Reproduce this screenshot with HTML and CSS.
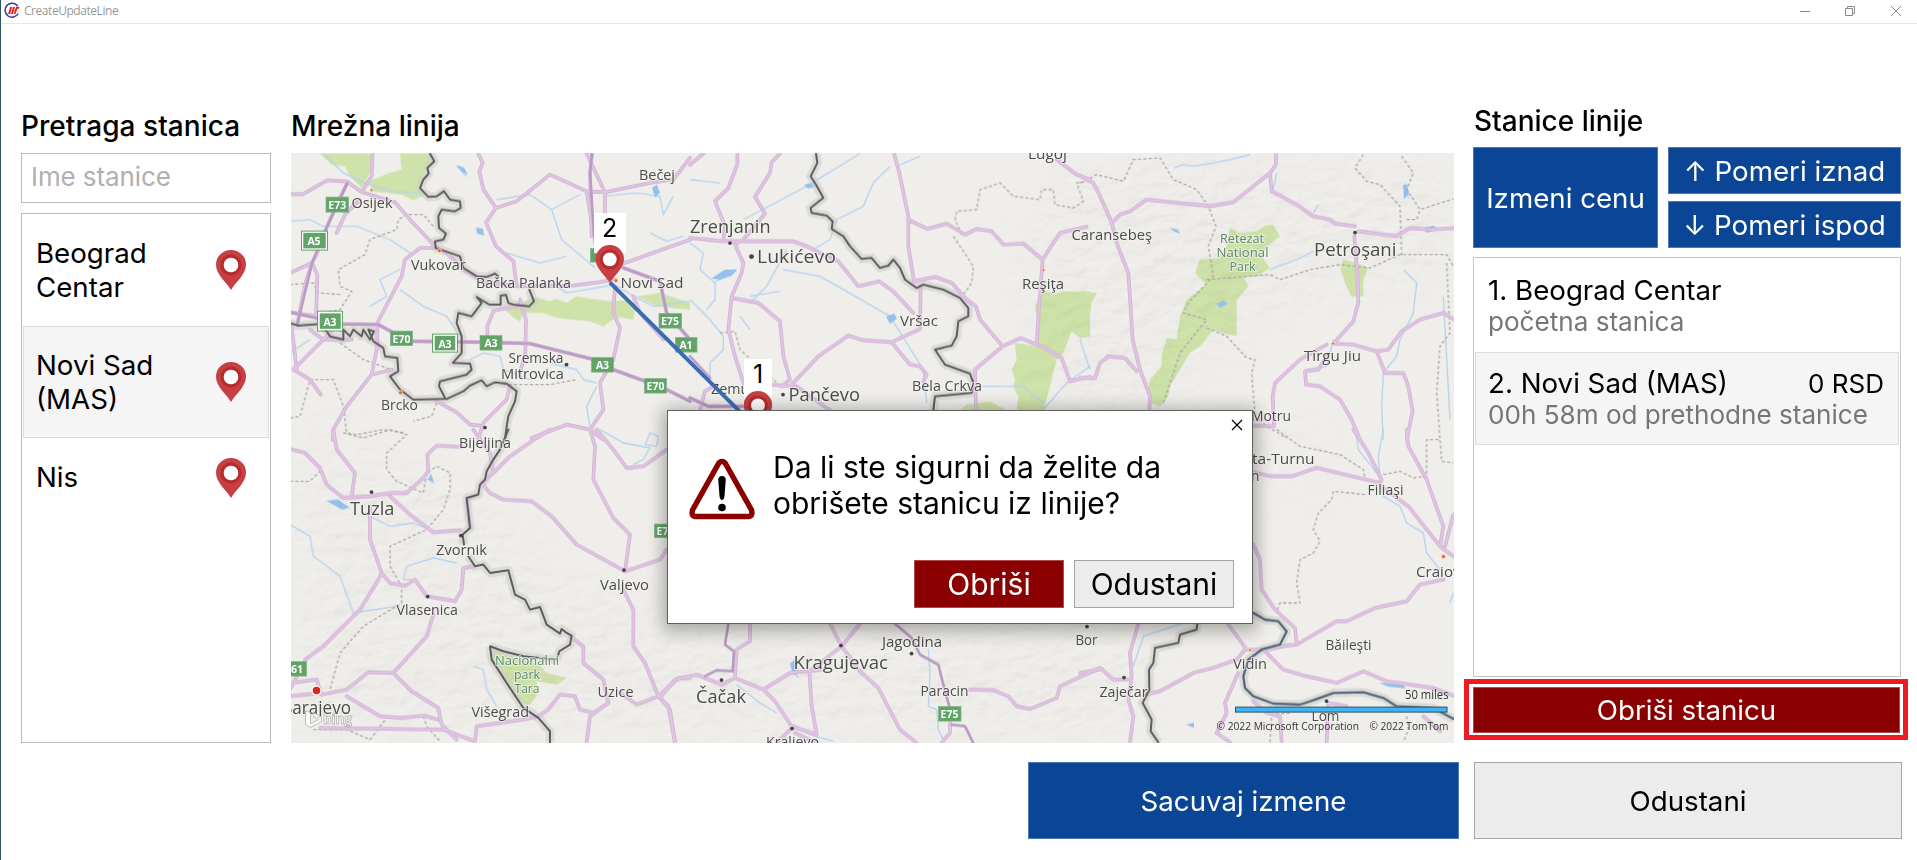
FILE: index.html
```html
<!DOCTYPE html>
<html lang="sr">
<head>
<meta charset="utf-8">
<title>CreateUpdateLine</title>
<link rel="stylesheet" href="styles.css">
</head>
<body>
<svg width="0" height="0" class="defs" aria-hidden="true">
  <symbol id="pin" viewBox="0 0 30 40"><path fill="#c64043" d="M15 40C11.500 33 0 25 0 14.700A15 14.700 0 0 1 30 14.700C30 25 18.500 33 15 40Z"/><circle cx="15" cy="15" r="10.500" fill="#b52b2e"/><circle cx="15" cy="15" r="7.300" fill="#fff"/></symbol>
</svg>
<div class="window">
  <header class="titlebar">
    <svg class="app-icon" width="17" height="17" viewBox="0 0 17 17"><path d="M14.800 4.200A7 7 0 1 0 15.200 11.500" fill="none" stroke="#3a3a9c" stroke-width="1.500"/><path d="M3 12l2.200-.5L7.200 5h2l-2 7zM8 12l2-7h2l-2 7zM11.500 9l1.600-4h3.400l-.7 1.800h-1.500L12.500 12h-1.600z" fill="#f01818"/></svg>
    <span class="app-name">CreateUpdateLine</span>
    <svg class="win-buttons" width="110" height="20" viewBox="0 0 110 20" fill="none" stroke="#8a8a8a"><path d="M0 10.500h10"/><path d="M45.500 7.500h7v7h-7zM47.500 7.500v-2h7v7h-2"/><path d="M91 5l10 10M101 5l-10 10"/></svg>
  </header>
  <main class="content">
    <section class="search">
      <h2>Pretraga stanica</h2>
      <div class="input">Ime stanice</div>
      <ul class="stations">
        <li><span>Beograd<br>Centar</span><svg class="pin"><use href="#pin"/></svg></li>
        <li class="selected"><span>Novi Sad<br>(MAS)</span><svg class="pin"><use href="#pin"/></svg></li>
        <li class="short"><span>Nis</span><svg class="pin"><use href="#pin"/></svg></li>
      </ul>
    </section>
    <section class="map-col">
      <h2>Mrežna linija</h2>
      <svg class="map" width="1163" height="590" viewBox="291 153.400 1163 590">
        <defs>
          <filter id="relief" x="0" y="0" width="100%" height="100%">
            <feTurbulence type="fractalNoise" baseFrequency=".05 .08" numOctaves="3" seed="8"/>
            <feDiffuseLighting surfaceScale="1.400" lighting-color="#fff"><feDistantLight azimuth="235" elevation="60"/></feDiffuseLighting>
            <feColorMatrix values=".42 0 0 0 .62 0 .42 0 0 .62 0 0 .42 0 .62 0 0 0 1 0"/>
          </filter>
          <filter id="soft"><feGaussianBlur stdDeviation="22"/></filter>
          <mask id="hills"><g fill="#fff" filter="url(#soft)"><path d="M291 470L400 450 480 490 560 560 680 620 1060 620 1170 650 1140 743H291z"/><path d="M1080 153H1454V290L1330 300 1230 350 1180 410H1080L1010 400 1020 230z"/><path d="M291 400L360 380 400 460 291 480zM1260 410H1350V520H1280z" opacity=".6"/></g></mask>
          <g id="roads">
            <g transform="translate(290 140) scale(.33333)">
              <path d="M0 164H38L112 122 172 126 215 158 245 110 248 40M172 130L140 195 105 275 80 345 66 370 45 435 22 555M215 158L315 188 360 240 440 325 470 340 520 390 580 425 680 440M600 432L690 440 850 438 925 428 975 420M140 280L165 225 210 180M66 370L82 405 78 530M0 400L66 370M0 518L120 535 150 553 265 555 330 590 370 605 600 608 720 612 905 658 970 690 1120 745 1200 785M440 325L390 325 345 360 335 410 262 550 262 620 245 705 170 800 130 870 128 900M440 785L500 818 540 855 570 858M305 690L245 705M120 580L30 670 10 690 60 720 92 765M5 560L20 690M565 42L578 70 568 95 580 150 618 205 588 248 618 320 670 365 680 440M618 205L680 185 780 105 890 155 945 158 1080 130 1150 120 1200 55M890 42L945 158 945 220M890 155L912 290 930 380M660 740L650 780 580 850 565 900M690 480L708 540 706 640 690 700M690 495L610 515 592 560 592 610M975 440L970 520 990 565 970 660 930 730 940 810 900 870M990 375L1200 300M1000 385L1110 425 1130 520 1200 600M1030 470L1050 520 1120 600M900 870L830 855 725 895M900 870L940 900"/>
              <path d="M906 42L900 100 905 290M185 600L100 600 60 570"/>
            </g>
            <g transform="translate(690 140) scale(.33333)">
              <path d="M142 42V75L115 145 75 185 105 260 100 305M270 42L245 68 240 100 195 172 225 222 160 300 135 315 160 370 155 400 125 470 115 570 135 650 170 760M0 295L100 305 310 305 355 322 400 345 445 365 505 440 568 425 610 455 670 520M125 475L205 490 270 545 280 650 300 720 275 740 M300 740L385 650 475 588 520 602 605 608 690 568 692 440M605 608L660 675 690 680 710 705 700 725M612 42L628 100 655 230 655 320 672 425 735 412 785 430 830 480 858 500 870 540 938 620 855 690 858 812M655 240L712 268 770 252 825 285 860 268 905 275 940 315 1000 312 1058 360 1110 280 1190 262M1058 360L1048 490 1040 615 992 595 938 620M1040 615L1075 630 1115 655 1140 725 1200 712M1100 60L1160 105 1200 120M0 75L40 42M240 735L320 740 420 812M0 775L55 800 160 800M30 812L45 755 80 735"/>
            </g>
            <g transform="translate(1080 140) scale(.33333)">
              <path d="M0 108L40 130 58 165 95 250 112 315 145 400 158 600 180 690 210 770 208 812M95 250L120 225 150 215 200 180 390 200 460 188 570 100 588 75V42M570 100L575 155 650 195 700 230 750 240 765 252 825 260M835 275L950 290 990 265 1050 270 1120 266M823 290L832 400 835 490 820 545 760 612 820 615 890 635 915 700 970 700 985 740 998 815 980 900M890 635L925 630 965 575 1020 540 1090 520 1120 538M740 615L660 660 585 730 578 770 582 860 520 858M740 650L715 690 675 695 678 735 720 740 780 780 815 840 840 900M0 715H45L60 670 85 650 135 655 170 695"/>
            </g>
            <g transform="translate(290 430) scale(.33333)">
              <path d="M130 0L140 60 195 130 185 200M0 58L45 70 90 115 110 165 160 205 240 200 300 190 350 190 400 145 415 125 412 75 440 48 520 52M300 200L360 255 430 308 510 302M240 230L240 330 275 430 265 450 210 540 100 650 45 690M275 430L300 460 345 468 375 450 410 500 495 515 515 480 520 415 550 410M430 555L410 620 310 730 235 728 170 780 95 795M310 730L365 785 445 835 455 885 500 930M445 870L400 858 335 865 270 860 170 800M0 760L80 750 95 795M20 740L0 780M0 800L90 790M550 0L600 70 610 130 575 160 600 190 640 210 725 215 785 260 860 345 1005 425M560 195L530 210 540 295M610 130L660 80 740 25 780 0M900 0L915 50 910 150 970 265 1020 315 1005 425 1110 390 1130 360M920 0L970 60 1010 115 1060 110 1130 60M1000 480L1030 540 1030 650 1065 700 1105 800 1040 825 990 790M840 620L880 650 880 700 940 750 955 820 900 860 890 935M955 820L910 850 870 840 855 800 810 795 775 840 745 860 700 870 560 890 555 935 460 900 90 895M1105 800L1140 840 1155 935M1105 800L1165 745 1200 745"/>
            </g>
            <g transform="translate(660 610) scale(.33333)">
              <path d="M0 265L45 210 110 195 185 225 225 205 310 240 390 190 490 180M225 205L230 120 270 95 270 42M0 265L25 290 45 400M310 240L345 275 395 350 470 375 455 290 448 185 545 110 510 42M545 110L600 42M545 110L600 185 655 235 720 360 770 400M350 400L395 355M405 370L470 400M930 240L1000 242 1045 260 1070 290 1110 298 1190 265 1200 230 1320 175M870 340V370L845 400"/>
            </g>
            <g transform="translate(1080 430) scale(.33333)">
              <path d="M820 0L865 70 905 150 900 160 710 115 635 140H575L520 128M980 0L985 50 1040 150 1090 290 1080 350 985 230 905 170M1120 255L1095 350M1080 350L1120 380M1090 450L1020 465 980 515 885 535 800 575 770 575 650 645 645 595 585 540 545 480 540 390 520 345M650 645L540 660 500 660 445 585M495 660L470 690 400 715 340 730 240 785 195 795M555 665L610 720 680 740 770 760 850 725 920 755 1060 775 1120 798M475 730L435 820 440 850 410 910 450 938M0 730L65 718 100 750 150 750M175 582L150 670 155 740 145 810 160 860 150 938M520 815L560 850 600 860 605 938M745 820L740 938M745 820L800 830M1030 860L1080 905"/>
            </g>
          </g>
          <g id="highways">
            <path transform="translate(290 140) scale(.33333)" d="M172 130L105 275 66 370 22 555M0 518L120 545 150 553 265 555 330 590 370 605 600 608 720 612 905 658 970 690 1120 745 1200 785M1000 385L1110 425 1130 520 1200 600M906 42L900 100 912 290"/>
            <path transform="translate(690 140) scale(.33333)" d="M0 650L60 715M0 775L55 800 160 800"/>
            <path transform="translate(660 610) scale(.33333)" d="M205 42L195 105 222 125 218 185 170 182 135 200M705 42L755 85 780 135 835 165 855 245 868 290M875 345L915 350 940 400"/>
          </g>
          <g id="borders">
            <path transform="translate(290 140) scale(.33333)" d="M420 42L433 65 412 85 416 102 400 120 390 145 415 172 440 170 462 155 480 180 510 185 512 205 495 215 455 210 445 230 447 265 468 282 460 300 435 305 437 325 510 350 520 385 560 410 590 412 615 402 625 410M718 450L732 485 718 500 670 495 655 490 648 466 632 468 632 495 598 495 560 472 575 490 545 530 505 520 500 550 515 590 515 640 488 670 540 672 545 690 530 705 450 725 447 740 465 775M0 550L25 558 95 553 120 590 160 600 160 570 180 590 190 570 215 590 220 570 240 600 252 575 235 570 250 605 280 625 285 650 322 655 325 695 300 710 330 750 370 780 470 778 520 755 540 738 575 722 590 740 615 728 650 732 680 755 675 785 655 830 650 860 645 900"/>
            <path transform="translate(290 430) scale(.33333)" d="M655 0L630 60 610 90 590 125 585 150 570 165 565 195 530 205 540 295 518 315 522 345M535 380L555 410 580 405 600 430 655 422 675 495 705 510 720 540 750 532 770 585 810 612 815 598 830 610 845 618 840 645 808 665 800 690M600 650L640 665 700 680 800 690M600 650L605 690 650 760 700 835 745 865 780 905 780 938"/>
            <path transform="translate(690 140) scale(.33333)" d="M378 42L382 70 362 110 378 135 400 175 362 205 365 220 410 228 428 245 425 268 460 290 480 320 515 358 545 355 570 385 595 378 610 360 630 385 645 420 680 445 700 435 760 450 810 475 835 505 835 530 805 545 800 590 785 618 735 630 765 675 840 702 850 730 845 760 735 770 730 812"/>
            <path transform="translate(1080 430) scale(.33333)" d="M352 582L350 600 300 615 295 640 225 655 220 700 207 720 208 780 188 820 215 870 212 905 235 938"/>
          </g>
          <g id="danube"><path transform="translate(1080 430) scale(.33333)" d="M520 550L555 570 595 575 620 605 600 645 545 660 505 690 490 740 495 775 520 800 580 822 660 825 700 812 760 790 850 788 910 805 950 830 1060 835 1120 868"/></g>
        </defs>
        <rect x="291" y="153" width="1163" height="591" fill="#efeeea"/>
        <g class="parks">
          <path transform="translate(290 140) scale(.33333)" d="M90 42H245L240 100 215 145 180 110 165 80 125 75zM330 42H420L430 70 400 100 390 145 405 165 370 182 335 165 250 155 235 125 300 100 335 90zM640 505L680 500 730 470 780 485 800 478 830 490 860 470 900 478 970 485 1000 482 1040 490 1030 540 980 532 940 560 900 545 850 540 800 535 760 520 700 520 690 545 665 530zM1040 470L1110 460 1200 490V510L1100 500z"/>
          <path transform="translate(690 140) scale(.33333)" d="M1058 450L1090 465 1120 455 1200 455V590L1170 595 1145 575 1120 640 1100 660 1080 740 1060 812H980L985 770 970 740 975 720 965 690 980 660 975 610 1040 620 1045 560 1035 500zM830 795L870 790 900 785 950 812H810z"/>
          <path transform="translate(1080 140) scale(.33333)" d="M0 455L50 460 35 490 25 560 0 600zM450 265L480 280 530 275 555 258 580 255 600 290 560 320 545 350 570 385 530 410 490 410 505 440 470 480 470 590 430 580 400 570 360 620 330 640 300 690 270 740 265 770 240 800 212 790 205 750 210 720 245 680 245 650 260 595 290 600 300 530 320 480 380 435 345 400 360 360 420 355 440 320zM790 360L830 370 865 385 850 420V470H815L795 430 782 390z"/>
          <path transform="translate(290 430) scale(.33333)" d="M600 655L640 668 690 690 740 700 770 730 830 745 800 765 740 755 740 800 720 825 690 820 640 750 605 690z"/>
        </g>
        <g mask="url(#hills)" class="relief"><rect x="291" y="153" width="1163" height="591" filter="url(#relief)"/></g>
        <g class="rivers">
          <path transform="translate(290 140) scale(.33333)" d="M100 42L160 100 225 130 300 155 400 160M0 245L60 240 100 260 200 260 300 300 360 340M240 500L290 470 270 420 330 390M330 450L400 500 470 530 510 590M620 180L720 165 785 210 870 165M785 210L815 300 915 385M650 340L750 370 830 350M800 440L830 460 975 435 1030 470 1090 500 1200 485M500 80L530 110M940 170L1040 160 1110 170 1120 225 1150 170M1080 280L1130 305 1180 290M540 660L580 640 630 650 640 690 720 720M920 740L890 800 900 860M0 640L60 600M780 670L860 690 880 720 920 730"/>
          <path transform="translate(690 140) scale(.33333)" d="M0 480L60 540 100 590 100 630 60 670 60 710M0 310L40 340 30 390 75 430 75 480 50 510M70 430L140 390M160 240L350 140 510 42M600 80L550 130 520 200 440 240 420 300 370 330M280 390L390 410 600 530 700 690 710 790M180 470L270 455M150 530L180 570M0 120L90 130M290 330L230 440 180 490M1200 680L1130 730 1060 810M860 740L1000 740 1060 790M620 80L690 50"/>
          <path transform="translate(1080 140) scale(.33333)" d="M280 85L310 75 340 80 400 70 450 60 510 45M570 390L650 360 700 335M60 170L95 240M970 390L1010 430 1000 520 960 600 950 650 910 700 905 800 910 900M0 600L30 690M1090 470L1110 840M580 150L590 100M760 600L740 680 680 690M700 220L715 195M975 130L985 175"/>
          <path transform="translate(290 430) scale(.33333)" d="M0 285L60 320 70 380 150 440 190 550 320 530M240 260L300 290 370 280 420 300M500 400L430 385 350 410 340 450 380 450M930 0L1000 40 1080 55 1060 90 1030 105M1065 45L1080 10 1105 20 1100 50 1065 45M550 710L580 720 590 780 620 830M410 150L430 145"/>
          <path transform="translate(660 610) scale(.33333)" d="M230 225L300 280 350 310M400 345L450 375 520 395M805 120L810 190 805 290 830 300 835 360 850 390M395 180L415 205"/>
          <path transform="translate(1080 430) scale(.33333)" d="M910 0L895 80 900 150 910 200 960 230 980 280 1030 310 1040 370 1080 420M830 20L835 60 890 130M160 710L190 620 310 580M1110 520L1120 490M560 660L630 640"/>
        </g>
        <g class="lakes">
          <path d="M456 165l8 3 4 7-5-2zM476 228l7 1 1 7-7-2zM326 501l12-1 12 8-8 2zM804 185l9-2 3 4-8 2zM886 317l8-3 3 5-7 5zM711 279l14-9 12 0-5 6-12 4zM1170 228l8 2 2 4-6-2zM1216 304l8-3 4 3-8 4zM1424 228l10-2 4 4-12 3zM1403 185h4l2 8-5 7zM652 188l5-3 3 8-5 5zM1379 683l23 1 4 5-18-2zM1186 725l8-2v5zM790 664l5-4 3 14-5 1zM428 480l3-6 3 10z"/>
        </g>
        <use href="#borders" class="halo"/>
        <use href="#danube" class="halo"/>
        <g class="dashed">
          <path transform="translate(290 140) scale(.33333)" d="M430 260L400 225 350 225 325 240 320 270 240 300 225 345 145 390 150 440 185 455 150 510 110 520M0 435L70 430 85 460 150 465M150 610L220 660 305 690M0 835L30 830 60 720 130 720 160 800 170 880 200 885 280 870 345 880M440 790L425 830 370 845M640 735L780 735 860 720"/>
          <path transform="translate(690 140) scale(.33333)" d="M790 290L850 380 845 430 820 465M815 285L795 240 800 215 860 210 870 150 930 130 970 170 1050 180 1055 150 1090 150 1095 195 1150 205 1180 185 1160 130 1200 125M90 580L135 575 150 630 240 710 270 740"/>
          <path transform="translate(1080 140) scale(.33333)" d="M0 130L50 105 130 125 160 60 240 55 280 120 350 150 385 200 408 260 385 320 400 410 325 490 310 520 380 540 300 640 250 790M380 420L570 405 600 420 690 390 780 375 870 385 960 345 1100 345 1120 380M850 45L825 85 860 125 900 135 960 200 965 350M965 50L1000 100 980 150 1020 210 1120 178M980 240L1010 240 1020 210M380 565L440 590 500 655 525 660 515 700 525 830 560 860 620 895M1100 370L1110 580 1080 620 1070 760 1080 900"/>
          <path transform="translate(290 430) scale(.33333)" d="M160 10L220 25 300 0 350 15 290 70 290 120 320 155 400 190 410 130 440 110 480 130 480 180 460 240 410 300 300 350 300 410 335 470 335 520 220 590 150 670 120 780M0 155L60 155 90 125M70 900L170 900 240 930 290 865 400 860 410 890 450 935"/>
          <path transform="translate(1080 430) scale(.33333)" d="M590 0L660 50 780 75 850 120 855 150M910 135L960 125 1000 145 1040 140 1040 30 1080 30 1085 95 1120 100M855 195L760 185 755 210 715 250 700 300 720 335 700 370 660 390 650 460 660 520 600 520 590 545M570 938L575 855 630 850M980 860L985 900 970 938"/>
        </g>
        <use href="#roads" class="road-out"/><use href="#roads" class="road-in"/>
        <use href="#highways" class="hwy"/>
        <use href="#borders" class="border"/>
        <use href="#danube" class="danube"/>
        <g class="dots"><circle cx="371.500" cy="492.500" r="1.900"/><circle cx="461" cy="536" r="1.900"/><circle cx="427.700" cy="597" r="1.900"/><circle cx="624" cy="570.500" r="1.900"/><circle cx="485" cy="428" r="1.900"/><circle cx="566.500" cy="365" r="1.900"/><circle cx="730" cy="243.500" r="1.900"/><circle cx="751.500" cy="257" r="2.400"/><circle cx="783" cy="395" r="1.900"/><circle cx="1355" cy="233" r="1.900"/><circle cx="721.500" cy="680.500" r="1.900"/><circle cx="792" cy="729" r="1.900"/><circle cx="841" cy="646" r="1.900"/><circle cx="911.500" cy="654" r="1.900"/><circle cx="1087" cy="627" r="1.900"/><circle cx="1124" cy="678" r="1.900"/><circle cx="1326.500" cy="701.500" r="1.900"/></g>
        <g class="reddots"><circle cx="371.500" cy="190.500" r="1.500"/><circle cx="439.500" cy="251" r="2"/><circle cx="616" cy="281" r="2"/><circle cx="400.500" cy="393" r="2"/><circle cx="1043.500" cy="270.500" r="1.500"/><circle cx="1333" cy="344" r="1.500"/><circle cx="1250" cy="650.500" r="1.500"/><circle cx="1443.500" cy="557" r="2"/></g>
        <circle cx="316.500" cy="691" r="4.500" fill="#d8281f" stroke="#f7f5f2" stroke-width="1.500"/>
        <g class="places">
          <text x="351.500" y="208" textLength="41" lengthAdjust="spacingAndGlyphs">Osijek</text>
          <text x="411" y="270" textLength="54.500" lengthAdjust="spacingAndGlyphs">Vukovar</text>
          <text x="476" y="288.500" textLength="95" lengthAdjust="spacingAndGlyphs">Bačka Palanka</text>
          <text x="620.500" y="288.500" textLength="63" lengthAdjust="spacingAndGlyphs">Novi Sad</text>
          <text x="639" y="180.500" textLength="36" lengthAdjust="spacingAndGlyphs">Bečej</text>
          <text x="508.500" y="363" textLength="55" lengthAdjust="spacingAndGlyphs">Sremska</text>
          <text x="501" y="379" textLength="63" lengthAdjust="spacingAndGlyphs">Mitrovica</text>
          <text x="381" y="410" textLength="37" lengthAdjust="spacingAndGlyphs">Brcko</text>
          <text x="459" y="448" textLength="52" lengthAdjust="spacingAndGlyphs">Bijeljina</text>
          <text x="436" y="555.500" textLength="51" lengthAdjust="spacingAndGlyphs">Zvornik</text>
          <text x="396.500" y="615.500" textLength="61.500" lengthAdjust="spacingAndGlyphs">Vlasenica</text>
          <text x="600" y="590" textLength="49" lengthAdjust="spacingAndGlyphs">Valjevo</text>
          <text x="597.500" y="697" textLength="36" lengthAdjust="spacingAndGlyphs">Uzice</text>
          <text x="471.500" y="717.500" textLength="57.500" lengthAdjust="spacingAndGlyphs">Višegrad</text>
          <text x="900" y="326.500" textLength="38" lengthAdjust="spacingAndGlyphs">Vršac</text>
          <text x="912" y="391.500" textLength="70" lengthAdjust="spacingAndGlyphs">Bela Crkva</text>
          <text x="1022" y="289" textLength="42" lengthAdjust="spacingAndGlyphs">Reşiţa</text>
          <text x="1071.500" y="240" textLength="80.500" lengthAdjust="spacingAndGlyphs">Caransebeş</text>
          <text x="1028" y="159.500" textLength="39" lengthAdjust="spacingAndGlyphs">Lugoj</text>
          <text x="711" y="394.500" textLength="47" lengthAdjust="spacingAndGlyphs">Zemun</text>
          <text x="1304" y="361.500" textLength="57" lengthAdjust="spacingAndGlyphs">Tîrgu Jiu</text>
          <text x="1251" y="421.500" textLength="40" lengthAdjust="spacingAndGlyphs">Motru</text>
          <text x="1207" y="464" textLength="107.500" lengthAdjust="spacingAndGlyphs">Drobeta-Turnu</text>
          <text x="1212" y="481" textLength="47.500" lengthAdjust="spacingAndGlyphs">Severin</text>
          <text x="1367.500" y="495" textLength="36" lengthAdjust="spacingAndGlyphs">Filiaşi</text>
          <text x="1416" y="577" textLength="53" lengthAdjust="spacingAndGlyphs">Craiova</text>
          <text x="1325.500" y="650.500" textLength="46" lengthAdjust="spacingAndGlyphs">Băileşti</text>
          <text x="1233" y="669" textLength="34" lengthAdjust="spacingAndGlyphs">Vidin</text>
          <text x="1311.500" y="721" textLength="28" lengthAdjust="spacingAndGlyphs">Lom</text>
          <text x="1075.500" y="645" textLength="22" lengthAdjust="spacingAndGlyphs">Bor</text>
          <text x="1099.500" y="697.500" textLength="48" lengthAdjust="spacingAndGlyphs">Zaječar</text>
          <text x="882" y="647" textLength="60" lengthAdjust="spacingAndGlyphs">Jagodina</text>
          <text x="920.500" y="696.500" textLength="48" lengthAdjust="spacingAndGlyphs">Paracin</text>
          <text x="766" y="747" textLength="53" lengthAdjust="spacingAndGlyphs">Kraljevo</text>
          <g class="mid">
            <text x="690" y="233.500" textLength="80.500" lengthAdjust="spacingAndGlyphs">Zrenjanin</text>
            <text x="757" y="263.500" textLength="79" lengthAdjust="spacingAndGlyphs">Lukićevo</text>
            <text x="788.500" y="401" textLength="71.500" lengthAdjust="spacingAndGlyphs">Pančevo</text>
            <text x="350" y="515" textLength="44.500" lengthAdjust="spacingAndGlyphs">Tuzla</text>
            <text x="1314" y="256" textLength="82.500" lengthAdjust="spacingAndGlyphs">Petroşani</text>
            <text x="793.500" y="669" textLength="94.500" lengthAdjust="spacingAndGlyphs">Kragujevac</text>
            <text x="696" y="703.500" textLength="50" lengthAdjust="spacingAndGlyphs">Čačak</text>
            <text x="283" y="714.500" textLength="68" lengthAdjust="spacingAndGlyphs" class="sarajevo">Sarajevo</text>
          </g>
          <g class="park-name">
            <text x="1220" y="243" textLength="44" lengthAdjust="spacingAndGlyphs">Retezat</text><text x="1216.500" y="257" textLength="52" lengthAdjust="spacingAndGlyphs">National</text><text x="1229.500" y="271" textLength="26" lengthAdjust="spacingAndGlyphs">Park</text>
            <text x="495" y="665.500" textLength="64" lengthAdjust="spacingAndGlyphs">Nacionalni</text><text x="514" y="679.500" textLength="26" lengthAdjust="spacingAndGlyphs">park</text><text x="514.500" y="693.500" textLength="25" lengthAdjust="spacingAndGlyphs">Tara</text>
          </g>
        </g>
        <g class="shields">
          <rect x="326" y="197.500" width="22.500" height="15"/><text x="337.200" y="209">E73</text>
          <rect x="302.500" y="232.500" width="24" height="17" class="ringed"/><text x="314" y="245.500">A5</text>
          <rect x="319" y="313" width="22.500" height="17" class="ringed"/><text x="330" y="326">A3</text>
          <rect x="390.500" y="331.500" width="22" height="14.500"/><text x="401.500" y="343">E70</text>
          <rect x="434" y="335.500" width="22" height="16" class="ringed"/><text x="445" y="348">A3</text>
          <rect x="480" y="336" width="22" height="14.500"/><text x="491" y="347.700">A3</text>
          <rect x="591.500" y="358" width="22" height="14.500"/><text x="602.500" y="369.700">A3</text>
          <rect x="644.500" y="379" width="22" height="14.500"/><text x="655.500" y="390.500">E70</text>
          <rect x="659" y="314" width="22.500" height="14.500"/><text x="670" y="325.500">E75</text>
          <rect x="675.500" y="338" width="21.500" height="14.500"/><text x="686" y="349.500">A1</text>
          <rect x="590.500" y="249" width="22" height="13.500"/>
          <rect x="284" y="662" width="22.500" height="14.500"/><text x="294" y="673">761</text>
          <rect x="654.500" y="524.500" width="22" height="13.500"/><text x="665.500" y="535.500">E75</text>
          <rect x="938.500" y="707" width="22.500" height="14.500"/><text x="949.500" y="718.500">E75</text>
        </g>
        <g class="bing"><path d="M305.500 711l5 2v11l8-4-4-2-2-5 9 4v5l-11 6-5-3z"/><text x="323" y="724" textLength="29" lengthAdjust="spacingAndGlyphs">bing</text></g>
        <rect x="1235.500" y="707.500" width="211.500" height="5" fill="#3db5f5" stroke="#35505e"/>
        <g class="credits"><text x="1405" y="699.500" textLength="43.500" lengthAdjust="spacingAndGlyphs" class="miles">50 miles</text><text x="1216.500" y="730" textLength="142.500" lengthAdjust="spacingAndGlyphs">© 2022 Microsoft Corporation</text><text x="1369.500" y="730" textLength="79" lengthAdjust="spacingAndGlyphs">© 2022 TomTom</text></g>
        <path d="M610 283L758 430" stroke="#3b6bb0" stroke-width="4"/>
        <g class="marker"><rect x="594" y="213.500" width="32" height="40"/><text x="609.700" y="237.700">2</text><use href="#pin" x="595.500" y="245" width="28.500" height="39"/></g>
        <g class="marker"><rect x="744" y="359" width="28" height="40"/><text x="758" y="383.300">1</text><use href="#pin" x="743.700" y="391" width="28.500" height="39"/></g>
      </svg>
    </section>
    <section class="line">
      <h2>Stanice linije</h2>
      <div class="tools">
        <button class="btn blue price">Izmeni cenu</button>
        <button class="btn blue">↑ Pomeri iznad</button>
        <button class="btn blue">↓ Pomeri ispod</button>
      </div>
      <ul class="stops">
        <li><div class="stop-name">1. Beograd Centar</div><div class="stop-sub">početna stanica</div></li>
        <li class="selected"><div class="stop-name">2. Novi Sad (MAS)<span class="fare">0 RSD</span></div><div class="stop-sub">00h 58m od prethodne stanice</div></li>
      </ul>
      <div class="delete-frame"><button class="btn red">Obriši stanicu</button></div>
    </section>
  </main>
  <footer class="actions"><button class="btn blue save">Sacuvaj izmene</button><button class="btn gray cancel">Odustani</button></footer>
  <div class="dialog">
    <svg class="dialog-close" width="12" height="12" viewBox="0 0 12 12"><path d="M1 1l10 10M11 1L1 11" stroke="#000" stroke-width="1.200"/></svg>
    <div class="dialog-body">
      <svg class="warn" width="68" height="62" viewBox="0 0 68 62"><path d="M34 3.500Q36.500 3.500 38 6.500L63.500 52Q65 58 61 58.500H7Q3 58 4.500 52L30 6.500Q31.500 3.500 34 3.500Z" fill="#fff" stroke="#8b0000" stroke-width="5.500" stroke-linejoin="round"/><path d="M30.200 21.500Q30.500 18 34 18T37.800 21.500L36.500 38Q36 42 34 42T31.500 38Z"/><circle cx="34" cy="49.500" r="3.800"/></svg>
      <p>Da li ste sigurni da želite da<br>obrišete stanicu iz linije?</p>
    </div>
    <div class="dialog-actions"><button class="btn red">Obriši</button><button class="btn gray">Odustani</button></div>
  </div>
</div>
</body>
</html>
```
FILE: styles.css
```css
* { box-sizing: border-box; }
body { margin: 0; background: #fff; color: #000; font-family: Inter, "Liberation Sans", sans-serif; font-size: 27.7px; line-height: 34px; }
h2, p, ul { margin: 0; padding: 0; font-weight: 400; list-style: none; }
h2 { font-size: 28px; font-weight: 500; line-height: 34px; white-space: nowrap; }
.defs { position: absolute; }
.window { position: relative; width: 1917px; height: 860px; overflow: hidden; border-left: 1px solid #2c5563; }
.titlebar { height: 24px; border-bottom: 1px solid #e6e6e6; display: flex; align-items: center; padding: 0 7px 2px 2px; }
.app-name { font: 12px/16px "Open Sans", "Noto Sans", sans-serif; color: #999; margin: 1px 0 0 4px; letter-spacing: -.45px; }
.win-buttons { margin-left: auto; }
.content { display: grid; grid-template-columns: 250px 1163px 444px; column-gap: 20px; padding-left: 20px; height: 720px; }
.search, .map-col { padding-top: 85px; }
.search h2, .map-col h2 { height: 44px; }
.search h2 { letter-spacing: .05px; }
.input { height: 50px; border: 1px solid #b9bbbf; padding: 6px 9px; color: #b0b0b0; font-size: 26px; letter-spacing: -.1px; }
.stations { margin-top: 10px; height: 530px; border: 1px solid #b9bbbf; padding: 0 1px; }
.stations li { height: 112px; display: flex; align-items: center; justify-content: space-between; padding: 0 22px 0 12px; border: 1px solid transparent; }
.stations li.short { height: 80px; }
.stations .short span { margin-top: -2px; }
.stations .selected, .stops .selected { background: #f5f5f5; border-color: #dcdcdc; }
.pin { width: 30px; height: 40px; }
.map { display: block; overflow: hidden; }
.line { padding-top: 80px; margin-left: -10px; }
.line h2 { padding-left: 10px; height: 43px; }
.tools { display: grid; grid-template-columns: 185px 233px; grid-template-rows: 47px 47px; gap: 7px 10px; padding-left: 9px; }
.price { grid-row: span 2; }
.btn { font: inherit; display: block; padding: 0; border: 1px solid; white-space: nowrap; text-align: center; }
.blue { background: #0b4696; border-color: #4f7ab8; color: #fff; }
.red { background: #8b0000; border-color: #b04a4a; color: #fff; }
.gray { background: #ececec; border-color: #a5a5a5; color: #000; }
.stops { margin: 9px 0 0 9px; width: 428px; height: 420px; border: 1px solid #c4c6c9; padding: 1px; }
.stops li { height: 93px; border: 1px solid transparent; padding: 13px 14px 0 12px; }
.stop-name { display: flex; justify-content: space-between; height: 32px; line-height: 34px; }
.fare { font-size: 26px; padding-top: 1px; }
.stop-sub { font-size: 26.1px; color: #767676; line-height: 34px; }
.delete-frame { margin: 2px 0 0; width: 444px; height: 61px; border: 5px solid #ed1c24; padding: 3px 3px 3px 4px; }
.delete-frame .btn { width: 100%; height: 46px; }
.actions { display: flex; gap: 15px; padding: 18px 15px 0 1027px; }
.actions .btn { height: 77px; }
.save { width: 431px; }
.cancel { width: 428px; }
.dialog { position: absolute; left: 666px; top: 410px; width: 586px; height: 214px; background: #fff; border: 1px solid #606060; box-shadow: 0 3px 16px 4px rgba(0,0,0,.3); font-size: 30px; line-height: 36px; padding: 8px 18px 0 20px; }
.dialog-close { display: block; margin: 0 -9px 0 auto; }
.dialog-body { display: flex; gap: 17px; margin-top: 27px; height: 102px; }
.dialog-body p { margin-top: -9px; white-space: nowrap; }
.dialog-actions { display: flex; justify-content: flex-end; gap: 10px; }
.dialog-actions .btn { height: 48px; width: 160px; }
.dialog-actions .red { width: 150px; }

.relief { mix-blend-mode: multiply; }
.parks { fill: #cbe0a2; opacity: .9; }
.rivers path { fill: none; stroke: #b4d3f1; stroke-width: 4; stroke-linejoin: round; }
.lakes { fill: #94c0ee; }
.halo { opacity: .6; fill: none; stroke: #cfcfca; stroke-width: 26px; stroke-linejoin: round; }
.dashed path { fill: none; stroke: #aaa8a5; stroke-width: 4; stroke-dasharray: 9 7; }
.road-out, .road-in, .hwy, .border, .danube { fill: none; stroke-linejoin: round; stroke-linecap: round; }
.road-out { stroke: #d2b1d6; stroke-width: 11px; }
.road-in { stroke: #dec6e0; stroke-width: 6px; }
.hwy { stroke: #b99bc4; stroke-width: 8px; }
.border { stroke: #5d5d5f; stroke-width: 6px; }
.danube { stroke: #55697a; stroke-width: 7px; }
.dots { fill: #444; }
.reddots { fill: #e8623a; stroke: #f9d3c0; stroke-width: 1; }
.places { font: 500 14.500px "Open Sans", "Noto Sans", sans-serif; fill: #4b4b4b; stroke: #f3f2ee; stroke-width: 2px; stroke-opacity: .7; paint-order: stroke; }
.mid { font-size: 18px; }
.park-name { font-size: 12.500px; fill: #5b8a68; }
.shields rect { fill: #62a468; stroke: #7db383; stroke-width: .7; }
.shields .ringed { stroke: #fff; stroke-width: 1.500; outline: 1px solid #62a468; }
.shields text { font: 700 10.500px "Open Sans", "Noto Sans", sans-serif; fill: #fff; text-anchor: middle; }
.bing { fill: #fff; fill-opacity: .75; stroke: #999; stroke-width: .6; font: 700 15px "Open Sans", "Noto Sans", sans-serif; }
.credits { font: 11px "Open Sans", "Noto Sans", sans-serif; fill: #333; }
.credits .miles { font-size: 12px; }
.marker rect { fill: #fff; }
.marker text { font-size: 25px; text-anchor: middle; fill: #000; }
```
